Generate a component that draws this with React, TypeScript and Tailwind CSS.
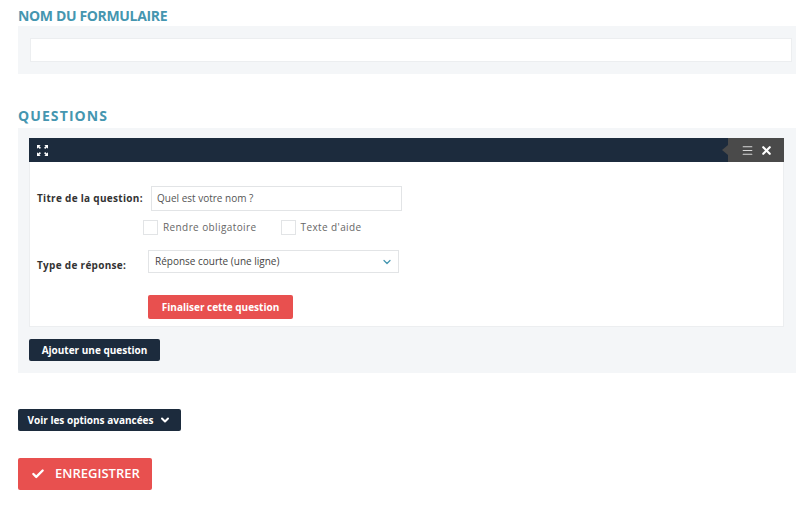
import { Check, ChevronDown, X, Menu } from 'lucide-react';

const font = { fontFamily: '"Open Sans", "Liberation Sans", sans-serif' };

export default function App() {
  return (
    <div className="min-h-[505px] w-[812px] bg-white pl-[18px] pt-[7px]" style={font}>
      {/* Nom du formulaire */}
      <h2 className="text-[14px] leading-[18px] font-bold tracking-tight text-[#4596b0]">
        NOM DU FORMULAIRE
      </h2>
      <div className="mt-[1px] w-[778px] bg-[#f4f6f8] py-3 pr-1 pl-3">
        <input
          className="block h-[24px] w-full border border-[#eceef0] bg-white px-2 text-[11px] outline-none"
          type="text"
        />
      </div>

      {/* Questions */}
      <h2 className="mt-[33px] text-[14px] leading-[18px] font-bold tracking-[1.1px] text-[#4596b0]">
        QUESTIONS
      </h2>
      <div className="mt-[3px] w-[778px] bg-[#f4f6f8] px-[11px] pt-[10px] pb-3">
        {/* Toolbar */}
        <div className="flex h-[24px] w-[755px] items-center justify-between bg-[#1c2b3d]">
          <svg className="ml-[8px] h-[11px] w-[11px] text-white" viewBox="0 0 12 12" fill="currentColor">
            <path d="M0 0h4L2.6 1.4 4.3 3.1 3.1 4.3 1.4 2.6 0 4z" />
            <path d="M12 0v4l-1.4-1.4-1.7 1.7-1.2-1.2 1.7-1.7L8 0z" />
            <path d="M0 12V8l1.4 1.4 1.7-1.7 1.2 1.2-1.7 1.7L4 12z" />
            <path d="M12 12H8l1.4-1.4-1.7-1.7 1.2-1.2 1.7 1.7L12 8z" />
          </svg>
          <div className="flex h-full items-center">
            <div className="h-0 w-0 border-y-[5px] border-r-[6px] border-y-transparent border-r-[#4a4a4a]" />
            <div className="flex h-full w-[56px] items-center gap-[6px] bg-[#4a4a4a] pl-[13px]">
              <Menu className="h-[13px] w-[13px] text-[#d8d8d8]" strokeWidth={2} />
              <X className="h-[13px] w-[13px] text-white" strokeWidth={4} />
            </div>
          </div>
        </div>

        {/* Card */}
        <div className="w-[755px] border border-t-0 border-[#eceef0] bg-white pt-[24px] pb-[7px] pl-[7px]">
          <div className="flex items-center">
            <label className="w-[114px] text-[10px] font-bold tracking-[0.3px] text-[#333]">Titre de la question:</label>
            <div className="flex h-[25px] w-[251px] items-center border border-[#e2e4e6] px-[5px] text-[10px] text-[#555]">
              Quel est votre nom ?
            </div>
          </div>
          <div className="mt-[9px] ml-[106px] flex items-center text-[10px] tracking-[0.4px] text-[#666]">
            <span className="h-[15px] w-[15px] border border-[#e2e4e6]" />
            <span className="ml-[5px]">Rendre obligatoire</span>
            <span className="ml-[24px] h-[15px] w-[15px] border border-[#e2e4e6]" />
            <span className="ml-[5px]">Texte d'aide</span>
          </div>
          <div className="mt-[15px] flex items-center">
            <label className="mt-[7px] w-[111px] text-[10px] font-bold tracking-[0.3px] text-[#333]">Type de réponse:</label>
            <div className="flex h-[23px] w-[251px] items-center justify-between border border-[#e2e4e6] pr-[5px] pl-[6px] text-[10px] text-[#444]">
              <span>Réponse courte (une ligne)</span>
              <ChevronDown className="h-[12px] w-[12px] text-[#4596b0]" strokeWidth={2.5} />
            </div>
          </div>
          <button className="mt-[22px] ml-[111px] flex h-[24px] w-[145px] items-center justify-center rounded-[2px] bg-[#e8504f] text-[10px] font-bold text-white">
            Finaliser cette question
          </button>
        </div>

        <button className="mt-[12px] flex h-[22px] w-[131px] items-center justify-center rounded-[2px] bg-[#1c2b3d] text-[10px] font-bold text-white">
          Ajouter une question
        </button>
      </div>

      {/* Options avancées */}
      <button className="mt-[36px] flex h-[22px] w-[163px] items-center justify-center gap-[6px] rounded-[2px] bg-[#1c2b3d] text-[10px] font-bold text-white">
        Voir les options avancées
        <ChevronDown className="h-[12px] w-[12px]" strokeWidth={4} />
      </button>

      {/* Enregistrer */}
      <button className="mt-[27px] flex h-[32px] w-[134px] items-center gap-[10px] rounded-[2px] bg-[#e8504f] pl-[13px] text-[13px] font-semibold text-white">
        <Check className="h-[14px] w-[14px]" strokeWidth={4} />
        ENREGISTRER
      </button>
    </div>
  );
}
